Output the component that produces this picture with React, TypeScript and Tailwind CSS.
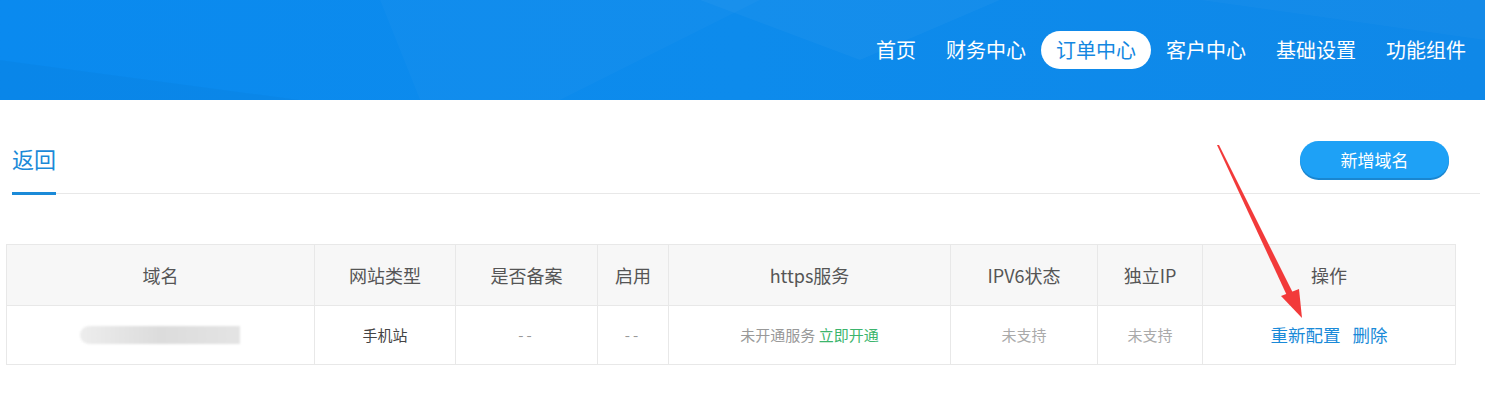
import React from "react";

const navItems = ["首页", "财务中心", "订单中心", "客户中心", "基础设置", "功能组件"];

const columns = [
  { title: "域名", width: "w-[308px]" },
  { title: "网站类型", width: "w-[141px]" },
  { title: "是否备案", width: "w-[142px]" },
  { title: "启用", width: "w-[71px]" },
  { title: "https服务", width: "w-[282px]" },
  { title: "IPV6状态", width: "w-[147px]" },
  { title: "独立IP", width: "w-[105px]" },
  { title: "操作", width: "w-[253px]" },
];

const cell = "border border-[#e8e8e8] text-center align-middle";

const App: React.FC = () => {
  return (
    <div className="relative w-[1485px] h-[393px] bg-white overflow-hidden font-['Noto_Sans_CJK_SC','Noto_Sans',sans-serif]">
      {/* header */}
      <header className="relative h-[100px] bg-gradient-to-r from-[#0a8aef] via-[#0d8bec] to-[#0f88e8] overflow-hidden">
        <svg className="absolute inset-0" width="1485" height="100">
          <polygon points="380,0 760,0 560,100 420,100" fill="#ffffff" opacity="0.025" />
          <polygon points="700,0 1000,0 860,60" fill="#ffffff" opacity="0.03" />
          <polygon points="0,60 300,100 0,100" fill="#000000" opacity="0.025" />
          <polygon points="1200,0 1485,0 1485,40" fill="#ffffff" opacity="0.025" />
        </svg>
        <nav className="relative flex h-full items-center justify-end pr-[4px]">
          {navItems.map((item) => (
            <span
              key={item}
              className={
                item === "订单中心"
                  ? "px-[15px] h-[38px] leading-[38px] rounded-full bg-white text-[#1487e0] text-[20px]"
                  : "px-[15px] h-[38px] leading-[38px] text-white text-[20px]"
              }
            >
              {item}
            </span>
          ))}
        </nav>
      </header>

      {/* tab bar */}
      <div className="flex items-end justify-between h-[94px] ml-[12px] mr-[5px] border-b border-[#e8e8e8]">
        <span className="text-[22px] leading-[30px] text-[#1b8ad8] pb-[19px] border-b-[3px] border-[#1b8ad8] -mb-[2px]">
          返回
        </span>
        <button className="mr-[31px] mb-[15px] w-[149px] h-[37px] rounded-full bg-[#1ea1f6] text-white text-[17px] shadow-[0_2px_0_#1a86d0]">
          新增域名
        </button>
      </div>

      {/* table */}
      <table className="ml-[6px] mt-[50px] w-[1449px] table-fixed border-collapse">
        <thead>
          <tr className="h-[61px] bg-[#f7f7f7]">
            {columns.map((c) => (
              <th key={c.title} className={`${cell} ${c.width} font-normal text-[18px] text-[#555]`}>
                {c.title}
              </th>
            ))}
          </tr>
        </thead>
        <tbody>
          <tr className="h-[59px] text-[15px]">
            <td className={cell}>
              <div className="flex justify-center pr-[2px]">
                <div className="w-[160px] h-[18px] rounded-l-full bg-gradient-to-r from-[#ededed] via-[#dcdcdc] to-[#e4e4e4] blur-[1px]" />
              </div>
            </td>
            <td className={`${cell} text-[#444]`}>手机站</td>
            <td className={`${cell} text-[#999] tracking-[3px]`}>--</td>
            <td className={`${cell} text-[#999] tracking-[3px]`}>--</td>
            <td className={cell}>
              <span className="text-[#999]">未开通服务</span>{" "}
              <span className="text-[#3cb56d]">立即开通</span>
            </td>
            <td className={`${cell} text-[#aaa]`}>未支持</td>
            <td className={`${cell} text-[#aaa]`}>未支持</td>
            <td className={`${cell} text-[17.5px] text-[#1a8ad8]`}>
              <span>重新配置</span>
              <span className="ml-[12px]">删除</span>
            </td>
          </tr>
        </tbody>
      </table>

      {/* red annotation arrow */}
      <svg className="absolute left-0 top-0 pointer-events-none" width="1485" height="393">
        <polygon points="1217,145 1219,145 1295,297 1289,300" fill="#f23a3a" />
        <polygon points="1281,296 1302,318 1299,289" fill="#f23a3a" />
      </svg>
    </div>
  );
};

export default App;
